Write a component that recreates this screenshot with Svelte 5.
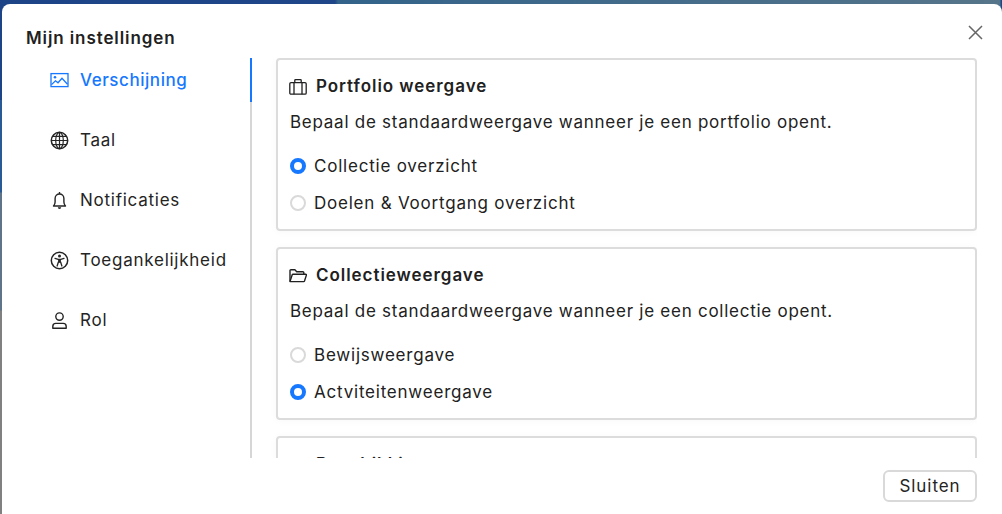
<script>
  let tabs = ['Verschijning', 'Taal', 'Notificaties', 'Toegankelijkheid', 'Rol'];
  let active = 'Verschijning';

  let portfolio = 'collectie';
  let collectie = 'activiteit';
</script>

<style>
  :global(body) {
    margin: 0;
    overflow: hidden;
    font-family: Inter, "Liberation Sans", sans-serif;
    color: #212121;
  }

  .page {
    width: 1002px;
    height: 514px;
    box-sizing: border-box;
    padding: 4px 0 0 2px;
    overflow: hidden;
    background:
      linear-gradient(90deg, #1c4486 0, #1e4688 335px, #33638a 338px, #56758a 1000px, #17488a 1001px) top / 100% 100px no-repeat,
      linear-gradient(180deg, #17488a 0, #17488a 95px, #2a5a95 96px, #2a5a95 192px, #5f7488 193px, #5f7488 310px, #808080 311px);
  }

  .dialog {
    height: 510px;
    box-sizing: border-box;
    background: #fff;
    border-radius: 8px 8px 0 0;
    padding: 0 25px 0 24px;
    position: relative;
    display: flex;
    flex-direction: column;
  }

  h2 {
    margin: 0;
    height: 54px;
    box-sizing: border-box;
    padding-top: 23px;
    font-size: 17px;
    line-height: 23px;
    font-weight: 600;
    letter-spacing: 0.9px;
  }

  .close {
    position: absolute;
    right: 19px;
    top: 21px;
    width: 15px;
    height: 15px;
    padding: 0;
    border: 0;
    background: none;
    color: #666;
  }

  .close svg { display: block; }

  .body {
    display: flex;
    height: 400px;
  }

  nav {
    width: 224px;
    flex: none;
    border-right: 2px solid #d6d6d6;
    position: relative;
    display: flex;
    flex-direction: column;
    box-sizing: content-box;
  }

  .tab {
    height: 60px;
    flex: none;
    display: flex;
    align-items: center;
    gap: 11px;
    padding: 0 0 16px 24px;
    box-sizing: border-box;
    font-size: 17px;
    letter-spacing: 0.75px;
    color: #242424;
  }

  .tab.on {
    color: #1677ff;
    font-weight: 500;
    letter-spacing: 0.55px;
  }

  .tab.on::after {
    content: '';
    position: absolute;
    right: -2px;
    top: 0;
    width: 2px;
    height: 44px;
    background: #1677ff;
  }

  .tab svg { flex: none; }

  .scroll {
    flex: 1;
    overflow: hidden;
    padding-left: 24px;
    display: flex;
    flex-direction: column;
    gap: 16px;
  }

  .card {
    flex: none;
    height: 173px;
    box-sizing: border-box;
    border: 2px solid #dcdcdc;
    border-radius: 4px;
    padding: 15px 12px 0;
    box-shadow: 0 1px 8px rgba(0, 0, 0, 0.03);
  }

  h3 {
    margin: 0;
    display: flex;
    align-items: center;
    gap: 9px;
    font-size: 17px;
    line-height: 23px;
    font-weight: 600;
    letter-spacing: 0.95px;
  }

  h3 svg { flex: none; margin-left: -1px; }

  p {
    margin: 13px 0 0;
    font-size: 17px;
    line-height: 23px;
    letter-spacing: 0.74px;
  }

  .options {
    margin-top: 21px;
    display: flex;
    flex-direction: column;
    gap: 14px;
  }

  label {
    display: flex;
    align-items: center;
    gap: 8px;
    font-size: 17px;
    line-height: 23px;
    letter-spacing: 0.78px;
  }

  input {
    appearance: none;
    margin: 0 0 2px;
    width: 16px;
    height: 16px;
    border: 2px solid #d9d9d9;
    border-radius: 50%;
    background: #fff;
    box-sizing: border-box;
  }

  input:checked {
    border: 4px solid #1677ff;
  }

  footer {
    display: flex;
    justify-content: flex-end;
    padding-top: 12px;
  }

  .close-btn {
    width: 94px;
    height: 32px;
    box-sizing: border-box;
    border: 2px solid #d9d9d9;
    border-radius: 6px;
    background: #fff;
    font-family: inherit;
    font-size: 17px;
    letter-spacing: 0.95px;
    color: #242424;
    padding: 0;
  }
</style>

<div class="page">
  <div class="dialog">
    <h2>Mijn instellingen</h2>
    <button class="close" aria-label="Sluiten">
      <svg width="15" height="15" viewBox="0 0 15 15" fill="none" stroke="currentColor" stroke-width="1.5">
        <path d="M1 1l13 13M14 1L1 14" />
      </svg>
    </button>

    <div class="body">
      <nav>
        {#each tabs as tab}
          <div class="tab" class:on={tab === active}>
            {#if tab === 'Verschijning'}
              <svg width="19" height="19" viewBox="0 0 19 19" fill="none" stroke="currentColor" stroke-width="1.3">
                <rect x="1" y="2.6" width="17" height="13" />
                <circle cx="5" cy="6.2" r="1.3" fill="currentColor" stroke="none" />
                <path d="M1.5 13.6l4-3.8 2.5 2 4-4.6 5.5 6" />
              </svg>
            {:else if tab === 'Taal'}
              <svg width="19" height="19" viewBox="0 0 19 19" fill="none" stroke="currentColor" stroke-width="1.2">
                <circle cx="9.5" cy="9.5" r="8.2" stroke-width="1.5" />
                <ellipse cx="9.5" cy="9.5" rx="3.8" ry="8.2" />
                <path d="M9.5 1.3v16.4M1.3 9.5h16.4M2.6 5.4h13.8M2.6 13.6h13.8" />
              </svg>
            {:else if tab === 'Notificaties'}
              <svg width="19" height="19" viewBox="0 0 19 19" fill="none" stroke="currentColor" stroke-width="1.4">
                <path d="M3.5 15h12c-1-1-1.6-2-1.6-4V7.4a4.4 4.4 0 0 0-8.8 0V11c0 2-.6 3-1.6 4z" stroke-linejoin="round" />
                <path d="M9.5 1v2" />
                <path d="M7.8 16.2a1.7 1.7 0 0 0 3.4 0z" fill="currentColor" stroke="none" />
              </svg>
            {:else if tab === 'Toegankelijkheid'}
              <svg width="19" height="19" viewBox="0 0 19 19" fill="none" stroke="currentColor" stroke-width="1.5">
                <circle cx="9.5" cy="9.5" r="8.2" />
                <circle cx="9.5" cy="4.9" r="1.5" fill="currentColor" stroke="none" />
                <path d="M5 7.3l3.2 1h2.6l3.2-1" stroke-linecap="round" stroke-width="1.3" />
                <path d="M8.1 8.2h2.8v3.6H8.1z" fill="currentColor" stroke="none" />
                <path d="M8.4 11l-1.3 4M10.6 11l1.3 4" stroke-linecap="round" stroke-width="1.3" />
              </svg>
            {:else}
              <svg width="19" height="19" viewBox="0 0 19 19" fill="none" stroke="currentColor" stroke-width="1.4">
                <circle cx="9.5" cy="5.6" r="3.7" />
                <path d="M2.8 17.2v-1.8a3 3 0 0 1 3-3h7.4a3 3 0 0 1 3 3v1.8z" stroke-linejoin="round" />
              </svg>
            {/if}
            <span>{tab}</span>
          </div>
        {/each}
      </nav>

      <div class="scroll">
        <section class="card">
          <h3>
            <svg width="18" height="18" viewBox="0 0 18 18" fill="none" stroke="currentColor" stroke-width="1.3">
              <rect x="0.8" y="4.6" width="16.4" height="11.6" rx="1.2" />
              <path d="M5.8 4.6V2.4a.8.8 0 0 1 .8-.8h4.8a.8.8 0 0 1 .8.8v2.2M5 4.6v11.6M13 4.6v11.6" />
            </svg>
            Portfolio weergave
          </h3>
          <p>Bepaal de standaardweergave wanneer je een portfolio opent.</p>
          <div class="options">
            <label><input type="radio" name="portfolio" value="collectie" bind:group={portfolio} />Collectie overzicht</label>
            <label><input type="radio" name="portfolio" value="doelen" bind:group={portfolio} />Doelen &amp; Voortgang overzicht</label>
          </div>
        </section>

        <section class="card">
          <h3>
            <svg width="18" height="18" viewBox="0 0 18 18" fill="none" stroke="currentColor" stroke-width="1.4">
              <path d="M1 14.6V3.6a.9.9 0 0 1 .9-.9h4l1.8 2h6.2a.9.9 0 0 1 .9.9v1.6" stroke-linejoin="round" />
              <path d="M1 14.6l2.2-6.8a.9.9 0 0 1 .9-.6h12.6a.7.7 0 0 1 .7.9l-1.9 5.9a.9.9 0 0 1-.9.6z" stroke-linejoin="round" />
            </svg>
            Collectieweergave
          </h3>
          <p>Bepaal de standaardweergave wanneer je een collectie opent.</p>
          <div class="options">
            <label><input type="radio" name="collectie" value="bewijs" bind:group={collectie} />Bewijsweergave</label>
            <label><input type="radio" name="collectie" value="activiteit" bind:group={collectie} />Actviteitenweergave</label>
          </div>
        </section>

        <section class="card">
          <h3>
            <svg width="18" height="18" viewBox="0 0 18 18"></svg>
            Beschikkingen
          </h3>
        </section>
      </div>
    </div>

    <footer>
      <button class="close-btn">Sluiten</button>
    </footer>
  </div>
</div>
